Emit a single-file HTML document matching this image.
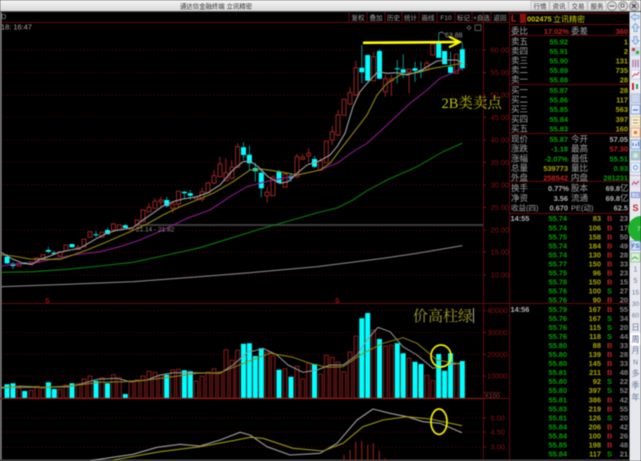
<!DOCTYPE html>
<html><head><meta charset="utf-8"><style>
html,body{margin:0;padding:0;background:#000;width:641px;height:461px;overflow:hidden}
svg{display:block;filter:blur(.45px)}
text{font-family:"Liberation Sans","Noto Sans CJK SC",sans-serif;font-size:7.4px;font-weight:bold}
.c{font-size:8.5px;font-weight:normal;fill:#a0a0a0}
.g{fill:#00a000}.y{fill:#a8a800}.w{fill:#b0b0b0}.r{fill:#c02020}.d{fill:#00a000}
.ax{font-size:7.4px;font-weight:normal;fill:#8c1010}
.tb{font-size:6.5px;font-weight:normal;fill:#a0a0a0;text-anchor:middle}
.e{text-anchor:end}
.m{text-anchor:middle;font-size:7px;font-weight:normal;fill:#6a7a9a}
</style></head><body>
<svg width="641" height="461" viewBox="0 0 641 461" xmlns="http://www.w3.org/2000/svg">
<defs><linearGradient id="tg" x1="0" y1="0" x2="0" y2="1"><stop offset="0" stop-color="#f4f4f4"/><stop offset="1" stop-color="#d8d8d8"/></linearGradient></defs>
<rect width="641" height="461" fill="#000"/>
<!-- title bar -->
<rect width="641" height="11.5" fill="url(#tg)"/>
<rect y="11" width="641" height="1" fill="#555"/>
<text x="216" y="8.4" text-anchor="middle" style="font-size:6.4px;font-weight:normal;fill:#333">通达信金融终端 立讯精密</text>
<text x="540" y="8.3" text-anchor="middle" style="font-size:6.5px;font-weight:normal;fill:#333">行情</text>
<text x="559" y="8.3" text-anchor="middle" style="font-size:6.5px;font-weight:normal;fill:#333">资讯</text>
<text x="578" y="8.3" text-anchor="middle" style="font-size:6.5px;font-weight:normal;fill:#333">交易</text>
<text x="597" y="8.3" text-anchor="middle" style="font-size:6.5px;font-weight:normal;fill:#333">服务</text>
<path d="M531 1.5h18v9h-18zM550 1.5h18v9h-18zM569 1.5h18v9h-18zM588 1.5h18v9h-18z" fill="none" stroke="#c4c4c4"/>
<circle cx="612" cy="6" r="4.5" fill="#ddd" stroke="#888"/><path d="M609.5 6h5" stroke="#555"/>
<circle cx="623" cy="6" r="4.5" fill="#ddd" stroke="#888"/><path d="M621 4h3v3h-3z" fill="none" stroke="#555" stroke-width=".8"/>
<circle cx="634" cy="6" r="4.5" fill="#ccc" stroke="#888"/><path d="M632 4l4 4M636 4l-4 4" stroke="#333"/>
<!-- grid -->
<path d="M3 50H483M3 72.7H483M3 95H483M3 117.3H483M3 140H483M3 162.3H483M3 185H483M3 207.3H483M3 230H483M3 252H483M3 275H483M3 310.5H483M3 332.5H483M3 354.5H483M3 376H483M3 418H483M3 432H483M3 447H483" stroke="#4a0606" stroke-width=".7" stroke-dasharray="1.5 2"/>
<path d="M0 22.5H509M0 303.5H641M0 398.5H509M483.5 12V461M509.5 12V461M509 13.5H629M509 24.5H629M509 35.5H629M509 84.5H629M509 133.5H629M509 181.5H629M509 213.5H629M349 12V22M367 12V22M385 12V22M402 12V22M419 12V22M437 12V22M455 12V22M472 12V22M491 12V22" stroke="#640a0a" stroke-width="1" fill="none"/>
<rect x="0" y="12" width="1.6" height="449" fill="#8a8a8a"/>
<rect y="459.6" width="629" height="1.4" fill="#555"/>
<rect x="135" y="224" width="348" height="2" fill="#3a3a3a"/>
<path d="M483 50h3M483 72.7h3M483 95h3M483 117.3h3M483 140h3M483 162.3h3M483 185h3M483 207.3h3M483 230h3M483 252h3M483 275h3M483 310.5h3M483 332.5h3M483 354.5h3M483 376h3M483 418h3M483 432h3M483 447h3" stroke="#8c1010" stroke-width=".8"/>
<!-- toolbar labels -->
<text class="tb" x="358" y="19.8">复权</text><text class="tb" x="376" y="19.8">叠加</text><text class="tb" x="393.5" y="19.8">历史</text><text class="tb" x="410.5" y="19.8">统计</text><text class="tb" x="428" y="19.8">画线</text><text class="tb" x="446" y="19.8">F10</text><text class="tb" x="463.5" y="19.8">标记</text><text class="tb" x="481.5" y="19.8">+自选</text><text class="tb" x="500" y="19.8">返回</text>
<text x="1" y="19" style="font-weight:normal;fill:#999">D</text>
<text x="1" y="29.5" style="font-weight:normal;fill:#aaa;font-size:7.4px">18: 16:47</text>
<path d="M469 25.7l2 2-2 2-2-2z" fill="none" stroke="#777" stroke-width=".7"/><path d="M475 25h6v5.5h-6z" fill="none" stroke="#777" stroke-width=".7"/>
<!-- axis labels -->
<text class="ax" x="490.5" y="52.5">60.00</text><text class="ax" x="490.5" y="75.2">55.00</text><text class="ax" x="490.5" y="97.5">50.00</text><text class="ax" x="490.5" y="119.8">45.00</text><text class="ax" x="490.5" y="142.5">40.00</text><text class="ax" x="490.5" y="164.8">35.00</text><text class="ax" x="490.5" y="187.5">30.00</text><text class="ax" x="490.5" y="210">25.00</text><text class="ax" x="490.5" y="232.5">20.00</text><text class="ax" x="490.5" y="254.5">15.00</text><text class="ax" x="490.5" y="277.5">10.00</text>
<text class="ax" x="487" y="313">40000</text><text class="ax" x="487" y="335">30000</text><text class="ax" x="487" y="357">20000</text><text class="ax" x="487" y="378.5">10000</text>
<text class="ax" x="490.5" y="420.5">6.00</text><text class="ax" x="490.5" y="434.5">4.50</text><text class="ax" x="490.5" y="449.5">3.00</text>
<path d="M484 392.5h17" stroke="#7a1010" stroke-width=".8"/><text class="ax" x="484.5" y="398" style="font-size:6.5px;fill:#904040">X100</text>
<text x="45" y="303" style="font-size:7px;fill:#a01010">S</text><text x="335" y="303" style="font-size:7px;fill:#a01010">S</text>

<!-- candle wicks -->
<path stroke="#0a8c8c" stroke-width="1" fill="none" d="M7 254V264M13 262V269M48.4 247V253.3M54.3 250.7V254.7M96 231V237.3M107.5 228V234.3M125.3 224V228M166.7 196.7V207.3M184.4 190.7V199.3M190.3 190V200M243.5 142.3V160M249.4 145.7V170M255.3 162.7V181.7M261.3 168.3V197.3M279 170V184M291 173.3V181.7M314.5 156V167.7M361.8 45V83.3M367.7 55V80.7M379.5 49.3V78.7M397.3 60V83.3M403.2 54.3V78.3M415 61.7V81.7M421 61.7V78.3M438.7 32.7V57.7M450.5 51.7V74M462.3 42.7V70.7"/>
<path stroke="#9a2222" stroke-width="1" fill="none" d="M78 245V250M113.4 223V232M148.9 203V208M154.8 198V202M160.7 196.7V206.7M172.6 201.7V212.7M178.5 191V208.3M202.1 187.7V201.7M208 181.7V193M214 170V184M219.9 156.7V177M225.8 158.3V181M231.7 160V179M237.6 143.3V168M267.2 186.7V202.7M273.1 175V196M284.9 172.7V187.7M296.7 154V178.3M302.7 154V160M308.6 148.3V163.3M320.4 158V171M332.2 126V145M338.1 110V136M350 87.3V105M355.9 61V96M373.6 51.7V81M385.4 75V96.7M391.4 75V96M409.1 69V93.3M426.8 60.7V70"/>
<!-- red bodies -->
<path fill="#000" stroke="#9a2222" stroke-width="1" d="M17 263.5h4v2.5h-4zM29 262h4v2.5h-4zM35 258h4v4.5h-4zM41 254.7h4v4.8h-4zM58 251.7h4v4.3h-4zM64 245h4v5.7h-4zM76 247.3h4v2h-4zM82 239.3h4v7.4h-4zM88 231.7h4v5.6h-4zM100 232.3h4v5h-4zM111.4 224h4v6h-4zM117.3 225h4v5h-4zM129 228h4v1.5h-4zM135 220h4v5h-4zM141 210h4v11.7h-4zM147 207.3h4v4.4h-4zM153 201.3h4v7h-4zM159 200h4v1.7h-4zM170.6 204h4v4.3h-4zM176.5 191.3h4v12.7h-4zM194 197.3h4v1.4h-4zM200 191.7h4v7.6h-4zM206 183h4v9.7h-4zM212 175.7h4v7.3h-4zM218 164h4v12.7h-4zM224 172.7h4v8h-4zM230 167.3h4v11h-4zM235.6 146.7h4v20.6h-4zM265 192.3h4v3.4h-4zM271 177.3h4v18.4h-4zM283 174h4v13h-4zM295 156.7h4v20h-4zM300.7 157.3h4v2h-4zM306.6 153.3h4v2.4h-4zM318.4 161h4v9h-4zM324.3 141.3h4v21.4h-4zM330.2 131.7h4v8.3h-4zM336 115h4v20h-4zM342 99.3h4v16h-4zM348 92.7h4v11.3h-4zM354 67.7h4v27.3h-4zM371.6 56.7h4v24h-4zM383.4 78.7h4v13h-4zM389.4 78.7h4v2h-4zM407 69.3h4v3h-4zM424.8 63.3h4v6h-4zM430.8 44h4v11h-4zM454.4 54.3h4v19h-4z"/>
<!-- cyan bodies -->
<path stroke="#00ffff" stroke-width="5" fill="none" d="M7 256.7V263.3M13 263.5V266M24.7 262.5V264M48.4 250V251.7M54.3 252.7V254M72 244V247.3M96 234.3V235.3M107.5 230V234.3M125.3 225.3V228M166.7 200V206M184.4 191.7V193.3M190.3 193.3V195.7M243.5 147.3V155M249.4 154.7V163.3M255.3 168V171.3M261.3 172.7V188.3M279 171.7V183M291 175.7V178.3M314.5 159V166.7M361.8 67.7V72.3M367.7 55V80.7M379.5 51V78.7M397.3 68.3V69.3M403.2 69.3V72.7M415 68.3V70.7M421 70V71.7M438.7 42.7V57.7M444.6 51V64.3M450.5 66.7V72.7M462.3 49.3V68.3"/>
<!-- MAs -->
<g fill="none" stroke-linejoin="round" stroke-linecap="round" stroke-width="1.1">
<polyline stroke="#8a1a8a" points="1.7,266 13,264.3 33,263.3 53,259 73,255 100,251.7 120,246.7 140,240 163,230 187,218.3 210,210 230,196.7 247,186.7 263,182.3 283,178.3 320,170 337,163.3 353,151.7 367,143.3 387,125 410,103.3 427,90 440,78.3 452,73.3 462,68.3"/>
<polyline stroke="#0a7a0a" points="1.7,272.3 33,271.7 67,269.3 100,266 133,262.3 167,255 200,247.7 227,239.3 257,230 320,212 337,208 353,200 367,190.7 387,180 417,166.7 443,151.7 462,143.3"/>
<polyline stroke="#808080" points="1.7,286.7 67,284.3 133,281.7 200,276.7 250,272.7 317,266.7 383,258.3 417,253.3 462,245.7"/>
<polyline stroke="#8e8a12" points="1.7,255 13,256 30,259 43,259.3 60,259.3 70,256 87,250 107,241.7 130,231.7 147,224 163,215 180,206.7 197,200 213,193.3 233,181.7 250,170 263,169.3 280,171.7 297,175 320,170 330,163.3 340,150 353,133.3 367,115 377,95 387,83.3 400,75 417,72.7 433,68.3 447,66 462,63.3"/>
<polyline stroke="#a0a0a0" points="1.7,252.7 13,259.3 23,263.3 32,264.3 40,259.3 48,256.7 58,252.7 70,250 80,248.3 87,244 97,238.3 107,233.3 115,230.7 123,229.3 133,227.7 143,220 155,211.7 163,206 173,201.7 183,199 197,196.7 208,192.7 220,185 233,170 243,161.7 250,161 258,166.7 268,176.7 280,183.3 288,181.7 297,173.3 307,165 320,160.7 330,155 337,146.7 345,133.3 353,106.7 360,91.7 370,80 378,71.7 387,73.3 397,72.7 407,75 420,71 430,65 437,61 447,60 457,60 462,63.3"/>
</g>
<text x="136" y="231.5" style="font-size:6.5px;font-weight:normal;fill:#8a8a8a">21.14 - 21.82</text>
<path d="M439 33l3 -1 3 2" fill="none" stroke="#999" stroke-width=".7"/>
<text x="445" y="37.5" style="font-size:7px;font-weight:normal;fill:#999">63.88</text>

<!-- volume -->
<path stroke="#00ffff" stroke-width="5" fill="none" d="M7 384.3V398M13 383.3V398M24.7 391V398M48.4 382.3V398M54.3 389V398M72 383.3V398M96 380.7V398M107.5 383.3V398M125.3 394V398M166.7 374.7V398M184.4 370.3V398M190.3 371.3V398M243.5 343.7V398M249.4 343.3V398M255.3 356V398M261.3 348.3V398M279 369.7V398M291 376.7V398M314.5 364V398M361.8 318.3V398M367.7 313V398M379.5 339V398M397.3 343.3V398M403.2 353.3V398M415 361.7V398M421 364V398M438.7 354V398M444.6 370.7V398M450.5 353.3V398M462.3 361V398"/>
<path fill="#100202" stroke="#7c1c1c" stroke-width="1" d="M17 388.3h4V398h-4zM29 390.3h4V398h-4zM35 386.3h4V398h-4zM41 388.3h4V398h-4zM58 389.3h4V398h-4zM64 385h4V398h-4zM76 383.7h4V398h-4zM82 379h4V398h-4zM88 376h4V398h-4zM100 377.7h4V398h-4zM111.4 374.7h4V398h-4zM117.3 377.7h4V398h-4zM129 381.7h4V398h-4zM135 380h4V398h-4zM141 376h4V398h-4zM147 371.3h4V398h-4zM153 372.3h4V398h-4zM159 375.3h4V398h-4zM170.6 370h4V398h-4zM176.5 369.3h4V398h-4zM194 381h4V398h-4zM200 376.3h4V398h-4zM206 372h4V398h-4zM212 368.7h4V398h-4zM218 371.7h4V398h-4zM224 349.7h4V398h-4zM230 360.3h4V398h-4zM235.6 350.3h4V398h-4zM265 352.3h4V398h-4zM271 356h4V398h-4zM283 368.7h4V398h-4zM295 366.3h4V398h-4zM300.7 378.7h4V398h-4zM306.6 363.3h4V398h-4zM318.4 374.3h4V398h-4zM324.3 355.3h4V398h-4zM330.2 357.3h4V398h-4zM336 362.3h4V398h-4zM342 371.7h4V398h-4zM348 352h4V398h-4zM354 336h4V398h-4zM371.6 330h4V398h-4zM383.4 346h4V398h-4zM389.4 345.3h4V398h-4zM407 358.3h4V398h-4zM424.8 375.3h4V398h-4zM430.8 380.7h4V398h-4zM454.4 363.3h4V398h-4z"/>
<path d="M0 398.5H483" stroke="#8a1818" stroke-width="1.2"/>
<g fill="none" stroke-linejoin="round" stroke-width="1">
<polyline stroke="#989898" points="1.7,387.3 20,387.3 43,387.3 70,386.7 83,383.3 97,379.3 117,378.3 130,381.7 147,380 160,375 173,372.7 193,372.7 220,373.3 233,365 248,351.7 255,350.7 263,348.3 277,355 288,365 303,372.3 317,370 330,365 343,365 357,355 367,340 378,327.3 390,331.7 403,346.7 417,355 433,368.3 447,365 460,363.3"/>
<polyline stroke="#8e8a12" points="1.7,388.3 20,386 43,387.3 70,386 100,382.3 123,381.7 147,380 173,376.7 197,373.3 220,372.7 250,360.7 270,353.3 293,357.3 310,363.3 327,367.3 343,366.7 363,353.3 383,343.3 403,337.7 417,343.3 437,360 460,364"/>
</g>
<!-- MACD -->
<path stroke="#a02020" stroke-width="1" d="M344 455V461M350 450V461M355.7 441.7V461M361.7 441V461M367.7 445V461M373.3 443.3V461M379.3 450.7V461M385.3 458.3V461"/>
<g fill="none" stroke-linejoin="round" stroke-width="1.1">
<polyline stroke="#a0a0a0" points="90,460.7 110,457.7 133,454.3 157,447.3 180,444.3 200,446 220,440 240,432.3 250,435 267,446.7 290,455 320,453.3 337,443.3 357,420 373,409 390,413.3 407,416.7 423,421.7 440,423.3 462,432.7"/>
<polyline stroke="#9a9612" points="113,460 160,451.7 200,446.7 233,440.7 250,437.3 263,438.3 293,448.3 323,451 343,443.3 363,426.7 383,420 407,416.7 430,419 462,425.7"/>
</g>
<!-- annotations -->
<path d="M363 42.8L412 42.4L458 42" stroke="#ffff00" stroke-width="2.6" fill="none"/>
<path d="M449 36.7L460 42L449 47.3" stroke="#ffff00" stroke-width="2" fill="none"/>
<text x="441.5" y="108" style="font-family:'Liberation Serif','Noto Serif CJK SC',serif;font-size:14.5px;font-weight:normal;fill:#bcbc10">2B类卖点</text>
<text x="413" y="321" style="font-family:'Liberation Serif','Noto Serif CJK SC',serif;font-size:15px;font-weight:normal;fill:#a0a028">价高柱绿</text>
<rect x="473" y="308" width="1" height="15" fill="#aaa"/>
<ellipse cx="441" cy="356" rx="10" ry="11" fill="none" stroke="#f0f000" stroke-width="1.7"/>
<ellipse cx="439" cy="421.7" rx="8" ry="12.7" fill="none" stroke="#f0f000" stroke-width="1.7"/>

<!-- right panel header -->
<text x="511" y="21.5" style="font-size:9px;fill:#d02020">L</text>
<rect x="520" y="14" width="6" height="9" fill="#8a1010"/>
<text x="527" y="21.5" style="fill:#c8c800;font-size:7.4px">002475</text>
<text x="553" y="22" style="font-size:8px;font-weight:normal;fill:#c8c800">立讯精密</text>
<text class="c" x="511" y="34">委比</text><text class="r e" x="569" y="34">17.02%</text><text class="c" x="571" y="34">委差</text><text class="r e" x="628" y="34">360</text>
<text class="c" x="511" y="44.5">卖五</text><text class="g e" x="568" y="44.5">55.92</text><text class="y e" x="628" y="44.5">1</text>
<text class="c" x="511" y="54">卖四</text><text class="g e" x="568" y="54">55.91</text><text class="y e" x="628" y="54">2</text>
<text class="c" x="511" y="63.5">卖三</text><text class="g e" x="568" y="63.5">55.90</text><text class="y e" x="628" y="63.5">131</text>
<text class="c" x="511" y="73">卖二</text><text class="g e" x="568" y="73">55.89</text><text class="y e" x="628" y="73">735</text>
<text class="c" x="511" y="82.5">卖一</text><text class="g e" x="568" y="82.5">55.88</text><text class="y e" x="628" y="82.5">28</text>
<text class="c" x="511" y="93">买一</text><text class="g e" x="568" y="93">55.87</text><text class="y e" x="628" y="93">28</text>
<text class="c" x="511" y="102.5">买二</text><text class="g e" x="568" y="102.5">55.86</text><text class="y e" x="628" y="102.5">117</text>
<text class="c" x="511" y="112">买三</text><text class="g e" x="568" y="112">55.85</text><text class="y e" x="628" y="112">563</text>
<text class="c" x="511" y="122">买四</text><text class="g e" x="568" y="122">55.84</text><text class="y e" x="628" y="122">397</text>
<text class="c" x="511" y="131.5">买五</text><text class="g e" x="568" y="131.5">55.83</text><text class="y e" x="628" y="131.5">160</text>
<text class="c" x="511" y="142">现价</text><text class="g e" x="568" y="142">55.87</text><text class="c" x="571" y="142">今开</text><text class="w e" x="628" y="142">57.05</text>
<text class="c" x="511" y="151.5">涨跌</text><text class="g e" x="568" y="151.5">-1.18</text><text class="c" x="571" y="151.5">最高</text><text class="r e" x="628" y="151.5">57.30</text>
<text class="c" x="511" y="161.5">涨幅</text><text class="g e" x="568" y="161.5">-2.07%</text><text class="c" x="571" y="161.5">最低</text><text class="g e" x="628" y="161.5">55.51</text>
<text class="c" x="511" y="171">总量</text><text class="y e" x="568" y="171">539773</text><text class="c" x="571" y="171">量比</text><text class="g e" x="628" y="171">0.93</text>
<text class="c" x="511" y="180.5">外盘</text><text class="r e" x="568" y="180.5">258542</text><text class="c" x="571" y="180.5">内盘</text><text class="g e" x="628" y="180.5">281231</text>
<text class="c" x="511" y="191">换手</text><text class="w e" x="569" y="191">0.77%</text><text class="c" x="571" y="191">股本</text><text class="w e" x="620" y="191">69.8</text><text class="c" x="620" y="191">亿</text>
<text class="c" x="511" y="201">净资</text><text class="w e" x="568" y="201">3.56</text><text class="c" x="571" y="201">流通</text><text class="w e" x="620" y="201">69.8</text><text class="c" x="620" y="201">亿</text>
<text class="c" x="511" y="210.5" style="font-size:7.5px">收益(四)</text><text class="w e" x="568" y="210.5">0.670</text><text class="c" x="571" y="210.5" style="font-size:7.5px">PE(动)</text><text class="w e" x="628" y="210.5">62.5</text>
<!-- ticks -->
<text class="w" x="510.5" y="221">14:55</text>
<text class="g e" x="567" y="221">55.74</text><text class="y e" x="601" y="221">83</text><text class="r" x="607" y="221">B</text><text class="w e" x="628" y="221" style="fill:#808080">23</text>
<text class="g e" x="567" y="230.5">55.74</text><text class="y e" x="601" y="230.5">106</text><text class="r" x="607" y="230.5">B</text><text class="w e" x="628" y="230.5" style="fill:#808080">17</text>
<text class="g e" x="567" y="239.5">55.75</text><text class="y e" x="601" y="239.5">158</text><text class="r" x="607" y="239.5">B</text><text class="w e" x="628" y="239.5" style="fill:#808080">50</text>
<text class="g e" x="567" y="248.5">55.74</text><text class="y e" x="601" y="248.5">184</text><text class="r" x="607" y="248.5">B</text><text class="w e" x="628" y="248.5" style="fill:#808080">49</text>
<text class="g e" x="567" y="257.5">55.74</text><text class="y e" x="601" y="257.5">130</text><text class="r" x="607" y="257.5">B</text><text class="w e" x="628" y="257.5" style="fill:#808080">28</text>
<text class="g e" x="567" y="266.5">55.77</text><text class="y e" x="601" y="266.5">150</text><text class="r" x="607" y="266.5">B</text><text class="w e" x="628" y="266.5" style="fill:#808080">33</text>
<text class="g e" x="567" y="275.5">55.75</text><text class="y e" x="601" y="275.5">96</text><text class="r" x="607" y="275.5">B</text><text class="w e" x="628" y="275.5" style="fill:#808080">23</text>
<text class="g e" x="567" y="284.5">55.78</text><text class="y e" x="601" y="284.5">150</text><text class="r" x="607" y="284.5">B</text><text class="w e" x="628" y="284.5" style="fill:#808080">15</text>
<text class="g e" x="567" y="293.5">55.76</text><text class="y e" x="601" y="293.5">100</text><text class="d" x="607" y="293.5">S</text><text class="w e" x="628" y="293.5" style="fill:#808080">27</text>
<text class="g e" x="567" y="302.5">55.76</text><text class="y e" x="601" y="302.5">90</text><text class="r" x="607" y="302.5">B</text><text class="w e" x="628" y="302.5" style="fill:#808080">20</text>
<text class="w" x="510.5" y="312">14:56</text>
<text class="g e" x="567" y="312">55.79</text><text class="y e" x="601" y="312">167</text><text class="r" x="607" y="312">B</text><text class="w e" x="628" y="312" style="fill:#808080">55</text>
<text class="g e" x="567" y="321">55.76</text><text class="y e" x="601" y="321">167</text><text class="d" x="607" y="321">S</text><text class="w e" x="628" y="321" style="fill:#808080">34</text>
<text class="g e" x="567" y="330">55.76</text><text class="y e" x="601" y="330">115</text><text class="d" x="607" y="330">S</text><text class="w e" x="628" y="330" style="fill:#808080">20</text>
<text class="g e" x="567" y="339">55.76</text><text class="y e" x="601" y="339">118</text><text class="d" x="607" y="339">S</text><text class="w e" x="628" y="339" style="fill:#808080">44</text>
<text class="g e" x="567" y="348">55.80</text><text class="y e" x="601" y="348">88</text><text class="r" x="607" y="348">B</text><text class="w e" x="628" y="348" style="fill:#808080">33</text>
<text class="g e" x="567" y="357">55.80</text><text class="y e" x="601" y="357">139</text><text class="r" x="607" y="357">B</text><text class="w e" x="628" y="357" style="fill:#808080">28</text>
<text class="g e" x="567" y="366">55.80</text><text class="y e" x="601" y="366">145</text><text class="r" x="607" y="366">B</text><text class="w e" x="628" y="366" style="fill:#808080">33</text>
<text class="g e" x="567" y="375">55.81</text><text class="y e" x="601" y="375">211</text><text class="r" x="607" y="375">B</text><text class="w e" x="628" y="375" style="fill:#808080">48</text>
<text class="g e" x="567" y="384">55.80</text><text class="y e" x="601" y="384">92</text><text class="d" x="607" y="384">S</text><text class="w e" x="628" y="384" style="fill:#808080">22</text>
<text class="g e" x="567" y="393">55.80</text><text class="y e" x="601" y="393">397</text><text class="d" x="607" y="393">S</text><text class="w e" x="628" y="393" style="fill:#808080">52</text>
<text class="g e" x="567" y="402.5">55.81</text><text class="y e" x="601" y="402.5">386</text><text class="r" x="607" y="402.5">B</text><text class="w e" x="628" y="402.5" style="fill:#808080">42</text>
<text class="g e" x="567" y="411.5">55.83</text><text class="y e" x="601" y="411.5">219</text><text class="r" x="607" y="411.5">B</text><text class="w e" x="628" y="411.5" style="fill:#808080">55</text>
<text class="g e" x="567" y="420.5">55.81</text><text class="y e" x="601" y="420.5">126</text><text class="d" x="607" y="420.5">S</text><text class="w e" x="628" y="420.5" style="fill:#808080">20</text>
<text class="g e" x="567" y="429.5">55.84</text><text class="y e" x="601" y="429.5">206</text><text class="r" x="607" y="429.5">B</text><text class="w e" x="628" y="429.5" style="fill:#808080">42</text>
<text class="g e" x="567" y="438.5">55.84</text><text class="y e" x="601" y="438.5">100</text><text class="r" x="607" y="438.5">B</text><text class="w e" x="628" y="438.5" style="fill:#808080">26</text>
<text class="g e" x="567" y="447.5">55.85</text><text class="y e" x="601" y="447.5">198</text><text class="r" x="607" y="447.5">B</text><text class="w e" x="628" y="447.5" style="fill:#808080">48</text>
<text class="g e" x="567" y="456.5">55.84</text><text class="y e" x="601" y="456.5">117</text><text class="d" x="607" y="456.5">S</text><text class="w e" x="628" y="456.5" style="fill:#808080">21</text>

<!-- right toolbar -->
<rect x="629.5" y="12" width="11.5" height="449" fill="#e6e8ee"/>
<path d="M631 17l4-3.5v2h4v3h-4v2z" fill="#cfe0f8" stroke="#6a9ad8" stroke-width=".8"/>
<path d="M635.5 23.5l3.5 4h-2v4h-3v-4h-2z" fill="#cfe0f8" stroke="#6a9ad8" stroke-width=".8"/>
<path d="M635.5 44.5l3.500-4h-2v-4h-3v4h-2z" fill="#cfe0f8" stroke="#6a9ad8" stroke-width=".8"/>
<rect x="631" y="47" width="9" height="9" fill="#c8d8e8"/><rect x="632" y="48" width="3" height="3" fill="#c84040"/><rect x="636" y="51" width="3" height="3" fill="#40a040"/>
<rect x="631" y="59" width="9" height="9" fill="#d0d8f0"/><path d="M633 60v7M635.5 60v7M638 60v7" stroke="#c06090" stroke-width="1"/>
<rect x="631" y="70" width="9" height="9" fill="#f4f4fa" stroke="#b0c0e0" stroke-width=".6"/><path d="M632 77l3-3 2 1 2-3" fill="none" stroke="#d04040"/>
<rect x="631" y="82" width="9" height="9" fill="#eef"/><path d="M633 83v7" stroke="#d02020" stroke-width="2"/><path d="M637 84v5" stroke="#20a040" stroke-width="2"/>
<rect x="631" y="94" width="9" height="9" fill="#c8d4ec" stroke="#98a8d0" stroke-width=".6"/>
<rect x="631" y="105" width="9" height="9" fill="#dde8fa" stroke="#6a8ed0" stroke-width=".7"/><path d="M633 110h5" stroke="#4060c0"/>
<rect x="631" y="117" width="9" height="9" fill="#fbeec8" stroke="#d8c080" stroke-width=".7"/><path d="M633 120h5M633 123h5" stroke="#808080" stroke-width=".7"/>
<rect x="631" y="128" width="9" height="9" fill="#fbe8d0" stroke="#e09050" stroke-width=".7"/><rect x="634" y="131" width="3" height="3" fill="#e07030"/>
<rect x="631" y="140" width="9" height="9" fill="#d8e6fa" stroke="#6a8ed0" stroke-width=".7"/><path d="M633 146v-3M636 146v-2M638.5 146v-4" stroke="#4060c0"/>
<rect x="631" y="151" width="9" height="9" fill="#a8c8c8" stroke="#88a8c0" stroke-width=".5"/><circle cx="635.5" cy="155.5" r="2.5" fill="#d0e8e0"/>
<rect x="631" y="163" width="9" height="9" fill="#e8f0fc" stroke="#a0c0e8" stroke-width=".7"/><circle cx="635.5" cy="167.5" r="2" fill="none" stroke="#5080c0" stroke-width=".8"/>
<path d="M629.5 175.5H641" stroke="#bcbcc8"/>
<rect x="631" y="179" width="9" height="8" fill="#dcdcf0"/><path d="M632 185l2-3 2 2 3-3" fill="none" stroke="#d04060"/>
<rect x="631" y="192" width="9" height="6" fill="#8890d8"/><text x="635.5" y="197" text-anchor="middle" style="font-size:5px;fill:#fff">BS</text>
<text x="635.5" y="211" text-anchor="middle" style="font-size:9px;fill:#c82830">S</text>
<circle cx="641" cy="229" r="13" fill="#20b030"/><text x="637" y="231" style="font-size:6.5px;font-weight:normal;fill:#c8f0c8">72</text>
<rect x="631" y="241" width="9" height="9" fill="#d8e6fa" stroke="#6a8ed0" stroke-width=".7"/><text x="635.5" y="248" text-anchor="middle" style="font-size:6px;fill:#4060b0">FS</text>
<rect x="631" y="253" width="9" height="9" fill="#d8f0d8" stroke="#80c080" stroke-width=".7"/><path d="M632 259l3-2 3 2" fill="none" stroke="#40a040"/>
<text class="m" x="635.5" y="271.5">1</text><text class="m" x="635.5" y="283">5</text><text class="m" x="635.5" y="294.5" style="font-size:6.5px">15</text><text class="m" x="635.5" y="306" style="font-size:6.5px">30</text><text class="m" x="635.5" y="317.5" style="font-size:6.5px">60</text>
<text class="m" x="635.5" y="330" style="font-size:8px">日</text>
<rect x="630" y="333" width="11" height="12" fill="#fff"/><text class="m" x="635.5" y="342" style="font-size:8px;fill:#4a5a88">周</text>
<text class="m" x="635.5" y="353" style="font-size:8px">月</text><text class="m" x="635.5" y="364.5">N</text><text class="m" x="635.5" y="376" style="font-size:8px">多</text><text class="m" x="635.5" y="388" style="font-size:8px">季</text><text class="m" x="635.5" y="400" style="font-size:8px">年</text>
</svg>
</body></html>
